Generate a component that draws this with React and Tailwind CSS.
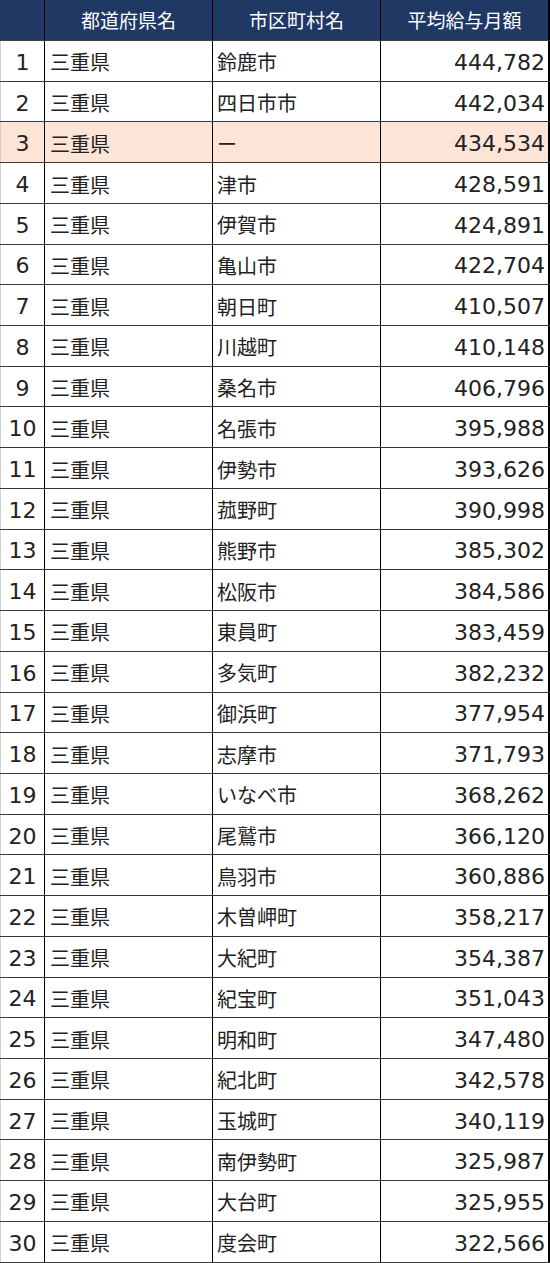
import React from "react";

const rows = [
  ["鈴鹿市", "444,782"],
  ["四日市市", "442,034"],
  ["ー", "434,534"],
  ["津市", "428,591"],
  ["伊賀市", "424,891"],
  ["亀山市", "422,704"],
  ["朝日町", "410,507"],
  ["川越町", "410,148"],
  ["桑名市", "406,796"],
  ["名張市", "395,988"],
  ["伊勢市", "393,626"],
  ["菰野町", "390,998"],
  ["熊野市", "385,302"],
  ["松阪市", "384,586"],
  ["東員町", "383,459"],
  ["多気町", "382,232"],
  ["御浜町", "377,954"],
  ["志摩市", "371,793"],
  ["いなべ市", "368,262"],
  ["尾鷲市", "366,120"],
  ["鳥羽市", "360,886"],
  ["木曽岬町", "358,217"],
  ["大紀町", "354,387"],
  ["紀宝町", "351,043"],
  ["明和町", "347,480"],
  ["紀北町", "342,578"],
  ["玉城町", "340,119"],
  ["南伊勢町", "325,987"],
  ["大台町", "325,955"],
  ["度会町", "322,566"],
];

const jp = "font-['Noto_Sans_CJK_JP',sans-serif]";
const num = "font-['DejaVu_Sans','Noto_Sans_CJK_JP',sans-serif]";

const App = () => {
  return (
    <div className="w-[550px] bg-white text-[#222]">
      <div className={`grid grid-cols-[45px_168px_168px_169px] h-[41px] bg-[#203864] text-white text-[19px] border-b border-[#404040] ${jp}`}>
        <div className="border-r border-black" />
        <div className="flex items-center justify-center border-r border-black">都道府県名</div>
        <div className="flex items-center justify-center border-r border-black">市区町村名</div>
        <div className="flex items-center justify-center border-r-2 border-black">平均給与月額</div>
      </div>
      {rows.map((r, i) => (
        <div
          key={i}
          className={`grid grid-cols-[45px_168px_168px_169px] h-[40.73px] border-b border-[#3a3a3a] ${i === 2 ? "bg-[#fce4d6]" : ""}`}
        >
          <div className={`flex items-center justify-center pt-[3px] text-[22px] border-r border-black border-l border-l-[#d0d0d0] ${num}`}>{i + 1}</div>
          <div className={`flex items-center pl-[5px] pt-[3px] text-[20px] border-r border-black ${jp}`}>三重県</div>
          <div className={`flex items-center pl-[4px] pt-[3px] text-[20px] border-r border-black ${jp}`}>{r[0]}</div>
          <div className={`flex items-center justify-end pr-[3px] pt-[3px] text-[22px] border-r-2 border-black ${num}`}>{r[1]}</div>
        </div>
      ))}
    </div>
  );
};

export default App;
